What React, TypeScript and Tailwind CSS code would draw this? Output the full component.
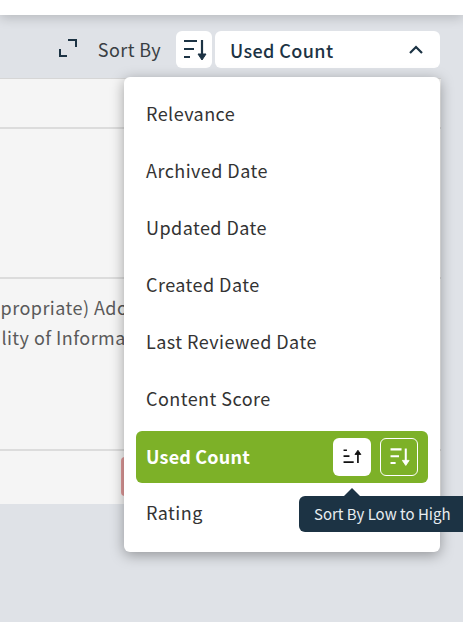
import React from "react";

const font = { fontFamily: '"Noto Sans CJK SC","Noto Sans",sans-serif' };

function SortIcon({ up, color, size = 26, sw = 2 }: { up?: boolean; color: string; size?: number; sw?: number }) {
  return (
    <svg width={size} height={size} viewBox="0 0 26 26" fill="none" stroke={color} strokeWidth={sw}>
      {up ? (
        <>
          <path d="M3 5h4M3 12h7M3 19h12" />
          <path d="M20 20V8" />
          <path d="M16.500 10l3.500-5 3.500 5z" fill={color} strokeWidth="1" />
        </>
      ) : (
        <>
          <path d="M3 4h13M3 12h10M3 20h6" />
          <path d="M21 3v17" />
          <path d="M17 17l4 6 4-6z" fill={color} strokeWidth="1" />
        </>
      )}
    </svg>
  );
}

const items = ["Relevance", "Archived Date", "Updated Date", "Created Date", "Last Reviewed Date", "Content Score"];

export default function App() {
  return (
    <div style={font} className="relative w-[463px] h-[622px] overflow-hidden bg-[#dfe2e7] text-[#262626]">
      <div className="h-[15px] bg-white shadow-[0_3px_12px_rgba(0,0,0,0.18)] relative" />
      <div className="h-[63px] flex items-start justify-end pr-[23px] pt-[16px]">
        <svg width="18" height="18" viewBox="0 0 18 18" fill="none" stroke="#1c3344" strokeWidth="2" className="mr-[21px] mt-[8px]">
          <path d="M9 1h8v7M1 10v7h7" />
        </svg>
        <span className="text-[18px] leading-[36px] tracking-[0.4px] text-[#3a3f44] mr-[15px]">Sort By</span>
        <div className="w-9 h-[37px] rounded-md bg-white flex items-center justify-center mr-[3px]">
          <SortIcon color="#1c3344" sw={2.2} />
        </div>
        <div className="w-[225px] h-[37px] rounded-md bg-white flex items-center justify-between pl-[15px] pr-[16px]">
          <span className="text-[18px] font-medium leading-6 tracking-[0.4px] text-[#1c3344]">Used Count</span>
          <svg width="16" height="16" viewBox="0 0 16 16" fill="none" stroke="#1c3344" strokeWidth="2.2"><path d="M2 11l6-6 6 6" /></svg>
        </div>
      </div>
      <div className="mr-[22px] border-t border-[#d6d6d6] bg-[#f5f5f5] text-[18px] tracking-[0.45px] text-[#5a5a5a]">
        <div className="h-[50px] border-b-2 border-[#dcdcdc]" />
        <div className="h-[150px] border-b-2 border-[#dcdcdc]" />
        <div className="h-[172px] border-b-2 border-[#dcdcdc] pt-[13px] leading-[30px] whitespace-nowrap overflow-hidden">
          <div className="-ml-[11px]">ppropriate) Adoption</div>
          <div className="-ml-[4px]">ility of Information</div>
        </div>
        <div className="h-[53px] relative">
          <div className="absolute left-[121px] top-[6px] w-[20px] h-[39px] rounded bg-[#e09a9a]" />
        </div>
      </div>

      <div className="absolute left-[124px] top-[77px] w-[316px] h-[475px] rounded-md bg-white shadow-[0_3px_14px_rgba(0,0,0,0.35)] pt-[8px] px-[12px] text-[18px] tracking-[0.45px]">
        {items.map((t) => (
          <div key={t} className="h-[57px] flex items-center pl-[10px] text-[#333]">{t}</div>
        ))}
        <div className="h-[52px] mt-[4px] rounded-md bg-[#7db128] flex items-center justify-between pl-[10px] pr-[10px] text-white font-bold tracking-[0.2px]">
          <span className="pb-[2px]">Used Count</span>
          <div className="flex gap-[9px]">
            <div className="w-[38px] h-[38px] rounded-md bg-white flex items-center justify-center">
              <SortIcon up color="#111" size={22} />
            </div>
            <div className="w-[38px] h-[38px] rounded-md border border-white flex items-center justify-center">
              <SortIcon color="#fff" size={22} sw={2.4} />
            </div>
          </div>
        </div>
        <div className="h-[58px] flex items-center pl-[10px] text-[#333]">Rating</div>
      </div>

      <div className="absolute left-[299px] top-[496px] w-[170px] h-[36px] rounded-md bg-[#1c3344] flex items-center pl-[15px] text-[15px] text-[#e8edf0] whitespace-nowrap">
        Sort By Low to High
        <div className="absolute left-[45px] -top-[8px] w-0 h-0 border-l-[8px] border-r-[8px] border-b-[8px] border-l-transparent border-r-transparent border-b-[#1c3344]" />
      </div>
    </div>
  );
}
